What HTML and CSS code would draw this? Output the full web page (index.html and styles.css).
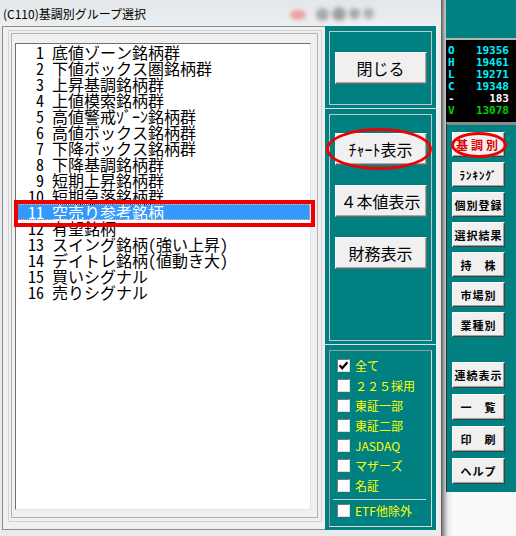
FILE: index.html
```html
<!DOCTYPE html>
<html lang="ja">
<head>
<meta charset="utf-8">
<title>(C110)基調別グループ選択</title>
<link rel="stylesheet" href="styles.css">
</head>
<body>
<div class="page">
  <div class="dialog">
    <div class="titlebar">
      <span class="title">(C110)基調別グループ選択</span>
      <span class="blob b1"></span>
      <span class="blob b2"></span>
      <span class="blob b3"></span>
      <span class="blob b4"></span>
      <span class="blob b5"></span>
    </div>
    <div class="client">
      <div class="lp">
        <div class="r2">
          <div class="r3">
            <div class="list">
              <div class="row"><span class="num">1</span><span>底値ゾーン銘柄群</span></div>
              <div class="row"><span class="num">2</span><span>下値ボックス圏銘柄群</span></div>
              <div class="row"><span class="num">3</span><span>上昇基調銘柄群</span></div>
              <div class="row"><span class="num">4</span><span>上値模索銘柄群</span></div>
              <div class="row"><span class="num">5</span><span>高値警戒ｿﾞｰﾝ銘柄群</span></div>
              <div class="row"><span class="num">6</span><span>高値ボックス銘柄群</span></div>
              <div class="row"><span class="num">7</span><span>下降ボックス銘柄群</span></div>
              <div class="row"><span class="num">8</span><span>下降基調銘柄群</span></div>
              <div class="row"><span class="num">9</span><span>短期上昇銘柄群</span></div>
              <div class="row"><span class="num">10</span><span>短期急落銘柄群</span></div>
              <div class="row sel"><span class="num">11</span><span>空売り参考銘柄</span></div>
              <div class="row"><span class="num">12</span><span>有望銘柄</span></div>
              <div class="row"><span class="num">13</span><span>スイング銘柄(強い上昇)</span></div>
              <div class="row"><span class="num">14</span><span>デイトレ銘柄(値動き大)</span></div>
              <div class="row"><span class="num">15</span><span>買いシグナル</span></div>
              <div class="row"><span class="num">16</span><span>売りシグナル</span></div>
            </div>
          </div>
        </div>
      </div>
      <div class="ctrl">
        <div class="grp g1">
          <div class="gin"><div class="btn">閉じる</div></div>
        </div>
        <div class="grp g2">
          <div class="gin">
            <div class="btn">ﾁｬｰﾄ表示</div>
            <div class="btn">４本値表示</div>
            <div class="btn">財務表示</div>
          </div>
        </div>
        <div class="grp g3">
          <div class="gin">
            <div class="ck"><span class="box"><svg width="11" height="11" viewBox="0 0 11 11"><path d="M1.6 5.2 L4.2 8.2 L9.4 2.2" fill="none" stroke="#000" stroke-width="2.2"/></svg></span><span>全て</span></div>
            <div class="ck"><span class="box"></span><span>２２５採用</span></div>
            <div class="ck"><span class="box"></span><span>東証一部</span></div>
            <div class="ck"><span class="box"></span><span>東証二部</span></div>
            <div class="ck"><span class="box"></span><span>JASDAQ</span></div>
            <div class="ck"><span class="box"></span><span>マザーズ</span></div>
            <div class="ck"><span class="box"></span><span>名証</span></div>
            <div class="sep"></div>
            <div class="ck"><span class="box"></span><span>ETF他除外</span></div>
          </div>
        </div>
      </div>
      <div class="frame-r"></div>
    </div>
  </div>
  <div class="behind">
    <div class="bw-top"></div>
    <div class="ohlc">
      <div class="oh"><span>O</span><span>19356</span></div>
      <div class="oh"><span>H</span><span>19461</span></div>
      <div class="oh"><span>L</span><span>19271</span></div>
      <div class="oh"><span>C</span><span>19348</span></div>
      <div class="oh wh"><span>-</span><span>183</span></div>
      <div class="oh gr"><span>V</span><span>13078</span></div>
    </div>
    <div class="bw-btns">
      <div class="bb red">基調別</div>
      <div class="bb">ﾗﾝｷﾝｸﾞ</div>
      <div class="bb">個別登録</div>
      <div class="bb">選択結果</div>
      <div class="bb">持　株</div>
      <div class="bb">市場別</div>
      <div class="bb">業種別</div>
      <div class="bb b2 first">連続表示</div>
      <div class="bb b2">一　覧</div>
      <div class="bb b2">印　刷</div>
      <div class="bb b2">ヘルプ</div>
    </div>
  </div>
  <div class="ann ann-rect"></div>
  <div class="ann ann-ell1"></div>
  <div class="ann ann-ell2"></div>
</div>
</body>
</html>
```
FILE: styles.css
```css
* { box-sizing: border-box; }
body { margin: 0; background: #fff; }
.page {
  display: flex;
  width: 516px;
  height: 536px;
  overflow: hidden;
  position: relative;
  font-family: "Noto Sans CJK JP", sans-serif;
}
.dialog {
  width: 441px;
  flex: none;
  display: flex;
  flex-direction: column;
  background: #e8eaeb;
}
.titlebar {
  height: 26px;
  position: relative;
  background: linear-gradient(180deg, #e3e7ea, #eceff1);
  display: flex;
  align-items: center;
  padding-left: 3px;
  font-size: 12px;
  color: #000;
}
.title { position: relative; z-index: 1; }
.blob {
  position: absolute;
  border-radius: 50%;
  filter: blur(2px);
}
.b1 { left: 290px; top: 10px; width: 16px; height: 10px; background: #eaa0a0; }
.b2 { left: 316px; top: 8px; width: 13px; height: 13px; background: #a8a8a8; }
.b3 { left: 332px; top: 7px; width: 14px; height: 14px; background: #a0a0a0; }
.b4 { left: 349px; top: 8px; width: 11px; height: 11px; background: #a8a8a8; }
.b5 { left: 363px; top: 8px; width: 11px; height: 11px; background: #b0b0b0; }
.client {
  flex: 1;
  display: flex;
  padding-left: 2px;
  padding-bottom: 6px;
}
.lp {
  width: 323px;
  border: 1px solid #8c8c8c;
  border-right: 0;
  background: #f0f0f0;
  padding: 3px 3px 7px 5px;
  display: flex;
}
.r2 {
  flex: 1;
  border: 1px solid #d2d2d2;
  padding: 2px 3px 3px 2px;
  display: flex;
}
.r3 {
  flex: 1;
  border: 1px solid #b2b2b2;
  padding: 9px 6px 7px 3px;
  display: flex;
}
.list {
  flex: 1;
  background: #fff;
  border: 1px solid;
  border-color: #707070 #e3e3e3 #e3e3e3 #707070;
  font-family: "Noto Sans Mono CJK JP", "Noto Sans CJK JP", monospace;
  font-size: 16px;
  line-height: 16px;
}
.row {
  display: flex;
  height: 16px;
  white-space: nowrap;
  color: #000;
}
.num {
  width: 28px;
  text-align: right;
  margin-right: 8px;
}
.row.sel {
  background: #3399ff;
  color: #fff;
  outline: 1px dotted #f0c070;
  outline-offset: -1px;
}
.ctrl {
  width: 111px;
  display: flex;
  flex-direction: column;
  gap: 1px;
  background: #dedede;
}
.grp {
  background: #008080;
  padding: 5px 4px 3px 4px;
  display: flex;
}
.g1 { height: 82px; }
.g2 { height: 235px; }
.g3 { flex: 1; }
.gin {
  flex: 1;
  border: 1px solid #c6c6c6;
  display: flex;
  flex-direction: column;
  align-items: center;
}
.g1 .gin { justify-content: center; }
.g2 .gin { padding-top: 18px; gap: 20px; }
.g3 .gin {
  align-items: stretch;
  padding: 4px 5px 0 7px;
  border-color: #9a9a9a #d8d8d8 #d8d8d8 #9a9a9a;
}
.btn {
  width: 92px;
  height: 32px;
  background: #f0f0f0;
  border: 1px solid;
  border-color: #fff #6a6a6a #6a6a6a #fff;
  box-shadow: inset -1px -1px #a8a8a8;
  display: flex;
  align-items: center;
  justify-content: center;
  font-size: 16px;
  color: #000;
  white-space: nowrap;
}
.ck {
  display: flex;
  align-items: center;
  gap: 5px;
  height: 20px;
  color: #ffff00;
  font-size: 12px;
  white-space: nowrap;
}
.box {
  width: 13px;
  height: 13px;
  flex: none;
  background: #fff;
  border: 1px solid;
  border-color: #7a7a7a #dadada #dadada #7a7a7a;
  display: flex;
  align-items: center;
  justify-content: center;
}
.sep {
  height: 1px;
  background: #d0d0d0;
  margin: 4px 0 0 -4px;
}
.frame-r {
  width: 5px;
  background: linear-gradient(90deg, #f4f6f6, #e6e8e9);
}
.behind {
  flex: 1;
  display: flex;
  flex-direction: column;
  padding-left: 5px;
  background: linear-gradient(90deg, #5a5a5a 0, #a8a8a8 3px, #e8e8e8 7px, #fafafa 12px);
}
.bw-top {
  height: 40px;
  background: #008080;
  border-bottom: 2px solid #b4b4b4;
}
.ohlc {
  height: 82px;
  background: #000;
  padding: 5px 7px 0 2px;
  font: bold 11px/12px "DejaVu Sans Mono", monospace;
  color: #00f0ff;
}
.oh { display: flex; justify-content: space-between; }
.oh.wh { color: #fff; }
.oh.gr { color: #00d000; }
.bw-btns {
  height: 370px;
  background: #008080;
  border-top: 3px solid #8a8a8a;
  border-left: 1px solid #303030;
  padding: 7px 0 0 5px;
  display: flex;
  flex-direction: column;
}
.bb {
  width: 53px;
  height: 25px;
  margin-bottom: 5px;
  background: #f0f0f0;
  border: 1px solid;
  border-color: #fff #404040 #404040 #fff;
  box-shadow: inset -1px -1px #a0a0a0;
  display: flex;
  align-items: center;
  justify-content: center;
  font-size: 11px;
  font-weight: bold;
  letter-spacing: 1px;
  color: #000;
  white-space: nowrap;
}
.bb.red { color: #e00000; letter-spacing: 3px; font-size: 12px; }
.bb.b2 { height: 26px; margin-bottom: 6px; }
.bb.first { margin-top: 20px; }
.ann {
  position: absolute;
  border-style: solid;
  border-color: #ee0000;
}
.ann-rect {
  left: 14px;
  top: 200px;
  width: 301px;
  height: 27px;
  border-width: 4px;
}
.ann-ell1 {
  left: 326px;
  top: 128px;
  width: 106px;
  height: 42px;
  border-width: 3px;
  border-radius: 50%;
}
.ann-ell2 {
  left: 451px;
  top: 132px;
  width: 56px;
  height: 26px;
  border-width: 3px;
  border-radius: 50%;
}
```
